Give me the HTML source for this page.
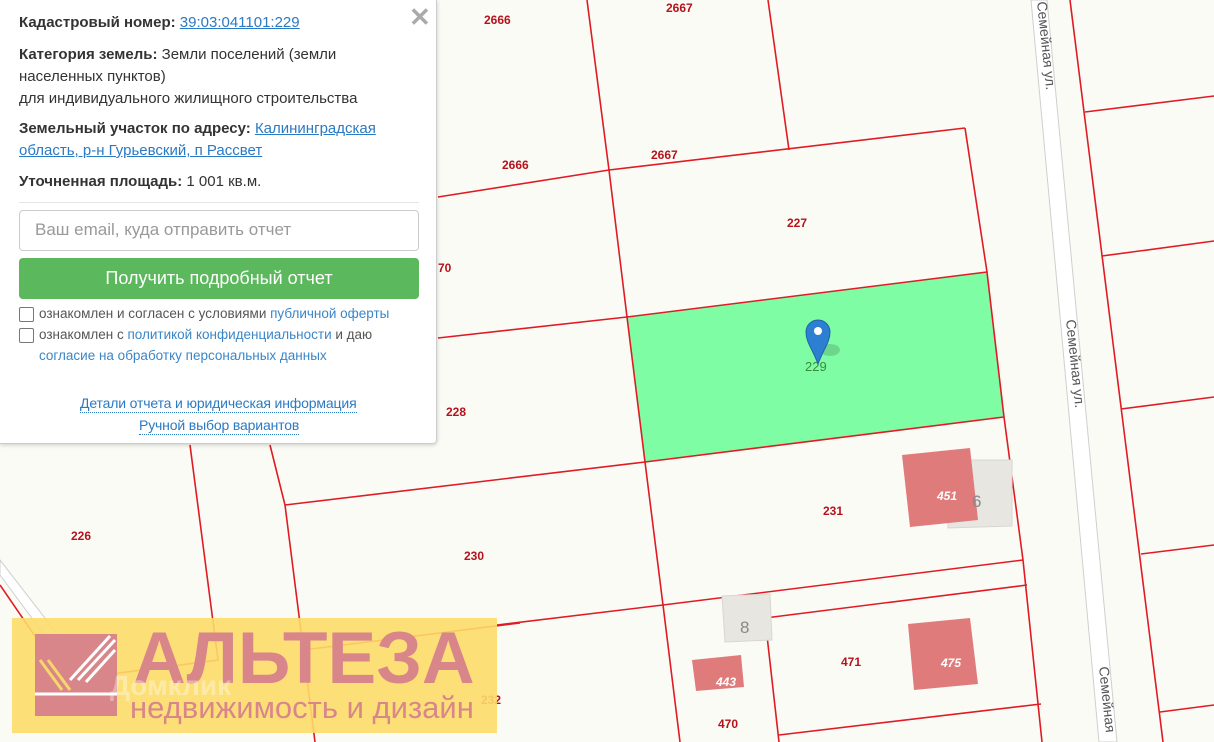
<!DOCTYPE html>
<html><head><meta charset="utf-8"><style>
html,body{margin:0;padding:0;width:1214px;height:742px;overflow:hidden;background:#fbfbf6;font-family:"Liberation Sans",Arial,sans-serif}
svg{position:absolute;left:0;top:0}
.panel{position:absolute;left:0;top:0;width:436px;height:443px;background:#fff;border:1px solid #ccc;border-top:none;border-left:none;border-radius:0 0 4px 0;box-shadow:0 1px 4px rgba(0,0,0,.2);font-size:15px;color:#333}
.panel p{margin:0;position:absolute;left:19px;line-height:22px}
b{font-weight:bold}
a{color:#2a7ac4;text-decoration:underline}
.close{position:absolute;left:409px;top:2px;font-size:26px;color:#aaa;font-weight:bold}
.inp{position:absolute;left:19px;top:210px;width:400px;height:41px;border:1px solid #ccc;border-radius:4px;box-sizing:border-box;font-size:17px;color:#999;padding:9px 15px}
.btn{position:absolute;left:19px;top:258px;width:400px;height:41px;background:#5cb85c;border-radius:4px;color:#fff;font-size:18px;text-align:center;line-height:41px}
.cb{position:absolute;left:19px;width:13px;height:13px;border:1px solid #777;border-radius:2px}
.panel p.sm{font-size:13.5px;color:#555}
.sm span{color:#3a86c8}
.dl{position:absolute;font-size:14px;color:#2a7ac4;border-bottom:1px dotted #2a7ac4;line-height:17px;letter-spacing:-0.15px}
</style></head><body>
<svg width="1214" height="742" viewBox="0 0 1214 742" font-family="Liberation Sans, sans-serif">
<polygon points="627,317 987,272 1004,417 645,462" fill="#7ffda4"/>
<g stroke="#cfcfcf" stroke-width="1" fill="#fff">
<polygon points="1031,0 1047,0 1117,742 1099,742"/>
<polygon points="0,560 0,575 85,690 96,684"/>
</g>
<g stroke="#e01b24" stroke-width="1.6" fill="none">
<polyline points="587,0 609,170 627,317 645,462 663,605 680,742"/>
<polyline points="768,0 789,150"/>
<polyline points="438,197 609,170 965,128"/>
<polyline points="965,128 987,272 1004,417 1023,560 1042,742"/>
<polyline points="438,338 627,317 987,272"/>
<polyline points="285,505 645,462 1004,417"/>
<polyline points="497,625 663,605 1023,560"/>
<polyline points="765,618 1027,585"/>
<polyline points="765,618 779,742"/>
<polyline points="779,735 1041,704"/>
<polyline points="1070,0 1163,742"/>
<polyline points="1085,112 1214,96"/>
<polyline points="1102,256 1214,241"/>
<polyline points="1121,409 1214,397"/>
<polyline points="1141,554 1214,545"/>
<polyline points="1160,712 1214,705"/>
<polyline points="190,445 218,660 65,680 0,585"/>
<polyline points="270,445 285,505 315,742"/>
<polyline points="303,650 520,623"/>
</g>
<g fill="#e8e6e1" stroke="#d8d6d0">
<polygon points="948,460 1012,460 1012,526 948,528"/>
<polygon points="722,596 770,594 772,640 725,642"/>
</g>
<g fill="#e07b7b">
<polygon points="902,455 970,448 978,520 910,527"/>
<polygon points="908,624 970,618 978,684 914,690"/>
<polygon points="692,660 741,655 744,687 696,691"/>
</g>
<g fill="#b5121b" font-size="12" font-weight="bold">
<text x="484" y="24">2666</text><text x="666" y="12">2667</text>
<text x="502" y="169">2666</text><text x="651" y="159">2667</text>
<text x="787" y="227">227</text><text x="438" y="272">70</text>
<text x="446" y="416">228</text><text x="71" y="540">226</text>
<text x="464" y="560">230</text><text x="823" y="515">231</text>
<text x="841" y="666">471</text><text x="718" y="728">470</text>
<text x="481" y="704">232</text>
</g>
<g fill="#fff" font-size="12" font-style="italic" font-weight="bold"><text x="937" y="500">451</text><text x="941" y="667">475</text><text x="716" y="686">443</text></g>
<g fill="#888" font-size="17"><text x="972" y="507">6</text><text x="740" y="633">8</text></g>
<text x="805" y="371" fill="#3a8a3a" font-size="13">229</text>
<g fill="#555" font-size="14">
<text transform="translate(1037,2) rotate(84)">Семейная ул.</text>
<text transform="translate(1066,320) rotate(84)">Семейная ул.</text>
<text transform="translate(1099,667) rotate(84)">Семейная</text>
</g>
<ellipse cx="830" cy="350" rx="10" ry="6" fill="rgba(0,0,0,.15)"/>
<path d="M818,364 C812,348 806,342 806,332 A12,12 0 0 1 830,332 C830,342 824,348 818,364Z" fill="#2d7fd1" stroke="#1f64a8"/>
<circle cx="818" cy="331" r="4" fill="#fff"/>
<rect x="12" y="618" width="485" height="115" fill="#fddc6a" opacity=".9"/>
<rect x="35" y="634" width="82" height="82" fill="#d9868a"/>
<g stroke="#fff" stroke-width="3"><line x1="70" y1="680" x2="110" y2="636"/><line x1="78" y1="680" x2="115" y2="640"/><line x1="86" y1="682" x2="115" y2="650"/><line x1="35" y1="694" x2="117" y2="694"/></g>
<g stroke="#f5d76a" stroke-width="3"><line x1="40" y1="660" x2="62" y2="690"/><line x1="48" y1="660" x2="70" y2="690"/></g>
<text x="133" y="683" font-size="73" font-weight="bold" fill="#d9868a">АЛЬТЕЗА</text>
<text x="130" y="718" font-size="31" fill="#d9868a">недвижимость и дизайн</text>
<text x="110" y="695" font-size="28" font-weight="bold" fill="#fff" opacity=".35">Домклик</text>
</svg>
<div class="panel">
<div class="close">✕</div>
<p style="top:12px"><b>Кадастровый номер:</b> <a>39:03:041101:229</a></p>
<p style="top:44px;width:410px"><b>Категория земель:</b> Земли поселений (земли<br>населенных пунктов)<br>для индивидуального жилищного строительства</p>
<p style="top:118px;width:410px"><b>Земельный участок по адресу:</b> <a>Калининградская<br>область, р-н Гурьевский, п Рассвет</a></p>
<p style="top:171px"><b>Уточненная площадь:</b> 1 001 кв.м.</p>
<div style="position:absolute;left:19px;top:202px;width:400px;border-top:1px solid #e5e5e5"></div>
<div class="inp">Ваш email, куда отправить отчет</div>
<div class="btn">Получить подробный отчет</div>
<div class="cb" style="top:307px"></div>
<div class="cb" style="top:328px"></div>
<p class="sm" style="left:39px;top:303px;line-height:21px">ознакомлен и согласен с условиями <span>публичной оферты</span><br>ознакомлен с <span>политикой конфиденциальности</span> и даю<br><span>согласие на обработку персональных данных</span></p>
<div class="dl" style="left:80px;top:395px">Детали отчета и юридическая информация</div>
<div class="dl" style="left:139px;top:417px">Ручной выбор вариантов</div>
</div>
</body></html>
